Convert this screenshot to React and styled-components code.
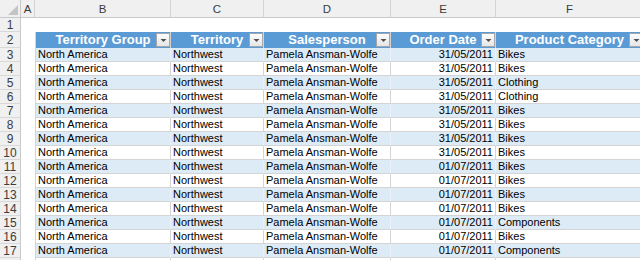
import React from "react";
import styled, { createGlobalStyle } from "styled-components";

const GlobalStyle = createGlobalStyle`
  html, body {
    margin: 0;
    padding: 0;
    background: #ffffff;
    overflow: hidden;
  }
  body {
    font-family: "Liberation Sans", Arial, sans-serif;
  }
`;

const COLS = [21, 14, 136, 93, 127, 105, 148];

const Sheet = styled.div`
  display: grid;
  grid-template-columns: ${COLS.map((c) => `${c}px`).join(" ")};
  grid-auto-rows: 14px;
  grid-template-rows: 18px 14px 16px;
  width: max-content;
  font-family: "Liberation Sans", Arial, sans-serif;
  font-size: 11px;
  color: #000;
`;

const Corner = styled.div`
  box-sizing: border-box;
  background: #f0f0f0;
  border-right: 1px solid #c8c8c8;
  border-bottom: 1px solid #c8c8c8;
  display: flex;
  align-items: flex-end;
  justify-content: flex-end;
  padding: 0 2px 2px 0;
`;

const ColHead = styled.div`
  box-sizing: border-box;
  background: #f0f0f0;
  border-right: 1px solid #d4d4d4;
  border-bottom: 1px solid #c8c8c8;
  display: flex;
  align-items: center;
  justify-content: center;
  color: #3c3c3c;
  font-size: 11.5px;
`;

const RowHead = styled.div`
  box-sizing: border-box;
  background: #f0f0f0;
  border-right: 1px solid #c8c8c8;
  border-bottom: 1px solid #d8d8d8;
  display: flex;
  align-items: center;
  justify-content: center;
  color: #3c3c3c;
  font-size: 12px;
`;

const Blank = styled.div`
  background: #ffffff;
`;

const TableHead = styled.div`
  box-sizing: border-box;
  background: #5b9bd5;
  border-right: 1px solid #d4d4d4;
  border-left: ${(p) => (p.$first ? "1px solid #d4d4d4" : "none")};
  display: flex;
  align-items: flex-start;
  overflow: visible;
  white-space: nowrap;
`;

const HeadLabel = styled.span`
  flex: 1;
  align-self: center;
  text-align: center;
  padding-left: 14px;
  color: #ffffff;
  font-weight: bold;
  font-size: 13px;
  line-height: 16px;
  overflow: visible;
`;

const FilterButton = styled.span`
  flex: none;
  box-sizing: border-box;
  width: 14px;
  height: 14px;
  margin-top: 1px;
  border: 1px solid #a6a6a6;
  background: linear-gradient(#fdfdfd, #e6e6e6);
  display: flex;
  align-items: center;
  justify-content: center;
`;

const Cell = styled.div`
  box-sizing: border-box;
  background: ${(p) => (p.$band ? "#ddebf7" : "#ffffff")};
  border-right: 1px solid ${(p) => (p.$band ? "#e9f0f8" : "#d4d4d4")};
  border-left: ${(p) => (p.$first ? "1px solid #d4d4d4" : "none")};
  border-bottom: 1px solid #d4d4d4;
  display: flex;
  align-items: center;
  justify-content: ${(p) => (p.$right ? "flex-end" : "flex-start")};
  padding: 0 ${(p) => (p.$right ? "2px" : "0")} 0 ${(p) => (p.$right ? "0" : "2px")};
  white-space: nowrap;
  overflow: visible;
  line-height: 13px;
`;

const FilterArrow = () => (
  <svg width="7" height="5" viewBox="0 0 7 5">
    <path d="M0.5 1 H6.5 L3.5 4 Z" fill="#505050" />
  </svg>
);

const CornerTriangle = () => (
  <svg width="10" height="10" viewBox="0 0 10 10">
    <path d="M10 0 V10 H0 Z" fill="#c4c4c4" />
  </svg>
);

const letters = ["A", "B", "C", "D", "E", "F"];
const headers = [
  "Territory Group",
  "Territory",
  "Salesperson",
  "Order Date",
  "Product Category",
];

const rows = [
  ["31/05/2011", "Bikes"],
  ["31/05/2011", "Bikes"],
  ["31/05/2011", "Clothing"],
  ["31/05/2011", "Clothing"],
  ["31/05/2011", "Bikes"],
  ["31/05/2011", "Bikes"],
  ["31/05/2011", "Bikes"],
  ["31/05/2011", "Bikes"],
  ["01/07/2011", "Bikes"],
  ["01/07/2011", "Bikes"],
  ["01/07/2011", "Bikes"],
  ["01/07/2011", "Bikes"],
  ["01/07/2011", "Components"],
  ["01/07/2011", "Bikes"],
  ["01/07/2011", "Components"],
];

export default function App() {
  return (
    <>
      <GlobalStyle />
      <Sheet>
        <Corner>
          <CornerTriangle />
        </Corner>
        {letters.map((l) => (
          <ColHead key={l}>{l}</ColHead>
        ))}

        <RowHead>1</RowHead>
        {letters.map((l) => (
          <Blank key={`r1${l}`} />
        ))}

        <RowHead>2</RowHead>
        <Blank />
        {headers.map((h, i) => (
          <TableHead key={h} $first={i === 0}>
            <HeadLabel>{h}</HeadLabel>
            <FilterButton>
              <FilterArrow />
            </FilterButton>
          </TableHead>
        ))}

        {rows.map(([date, cat], i) => {
          const rowNum = i + 3;
          const band = rowNum % 2 === 1;
          return (
            <React.Fragment key={rowNum}>
              <RowHead>{rowNum}</RowHead>
              <Blank />
              <Cell $band={band} $first>
                North America
              </Cell>
              <Cell $band={band}>Northwest</Cell>
              <Cell $band={band}>Pamela Ansman-Wolfe</Cell>
              <Cell $band={band} $right>
                {date}
              </Cell>
              <Cell $band={band}>{cat}</Cell>
            </React.Fragment>
          );
        })}

        <RowHead />
        <Blank />
        <Cell $first />
        <Cell />
        <Cell />
        <Cell />
        <Cell />
      </Sheet>
    </>
  );
}
